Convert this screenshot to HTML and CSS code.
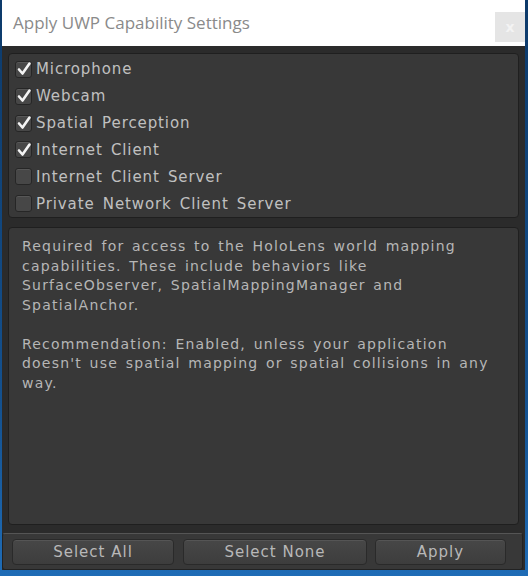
FILE: index.html
```html
<!DOCTYPE html>
<html>
<head>
<meta charset="utf-8">
<link rel="stylesheet" href="styles.css">
</head>
<body>
<div class="window">
  <div class="titlebar">
    <span class="title">Apply UWP Capability Settings</span>
    <span class="close">x</span>
  </div>
  <div class="content">
    <div class="panel caps">
      <label class="cap"><span class="box on"><svg viewBox="0 0 16 16"><path d="M3 8.5 L6.5 12.5 L13.5 2.5" /></svg></span>Microphone</label>
      <label class="cap"><span class="box on"><svg viewBox="0 0 16 16"><path d="M3 8.5 L6.5 12.5 L13.5 2.5" /></svg></span>Webcam</label>
      <label class="cap"><span class="box on"><svg viewBox="0 0 16 16"><path d="M3 8.5 L6.5 12.5 L13.5 2.5" /></svg></span>Spatial Perception</label>
      <label class="cap"><span class="box on"><svg viewBox="0 0 16 16"><path d="M3 8.5 L6.5 12.5 L13.5 2.5" /></svg></span>Internet Client</label>
      <label class="cap"><span class="box"></span>Internet Client Server</label>
      <label class="cap"><span class="box"></span>Private Network Client Server</label>
    </div>
    <div class="panel desc">
      <p>Required for access to the HoloLens world mapping capabilities. These include behaviors like SurfaceObserver, SpatialMappingManager and SpatialAnchor.</p>
      <p>Recommendation: Enabled, unless your application doesn't use spatial mapping or spatial collisions in any way.</p>
    </div>
  </div>
  <div class="toolbar">
    <button class="btn btn-all">Select All</button>
    <button class="btn btn-none">Select None</button>
    <button class="btn btn-apply">Apply</button>
  </div>
</div>
</body>
</html>
```
FILE: styles.css
```css
html, body {
  margin: 0;
  padding: 0;
}
body {
  width: 528px;
  height: 576px;
  background: linear-gradient(180deg, #0d3a6a 0%, #14518f 70%, #1f6cb6 100%);
  overflow: hidden;
}
.window {
  margin-left: 2px;
  width: 523px;
  height: 570px;
  display: flex;
  flex-direction: column;
  background: #2b2b2b;
}
.titlebar {
  height: 46px;
  background: #ffffff;
  display: flex;
  align-items: flex-start;
  justify-content: space-between;
  flex-shrink: 0;
}
.title {
  font-family: "Open Sans", "Noto Sans", sans-serif;
  font-size: 17px;
  color: #8a8a8a;
  margin: 11px 0 0 11px;
}
.close {
  width: 30px;
  height: 30px;
  margin: 12px 0 0 0;
  background: #e5e5e5;
  color: #f3f3f3;
  font-family: "DejaVu Sans", sans-serif;
  font-size: 14px;
  font-weight: bold;
  display: flex;
  align-items: center;
  justify-content: center;
}
.content {
  flex: 1;
  padding: 7px 6px 8px 6px;
  display: flex;
  flex-direction: column;
  gap: 9px;
  background: #2b2b2b;
}
.panel {
  background: #383838;
  border: 1px solid #1f1f1f;
  border-radius: 4px;
  box-sizing: border-box;
}
.caps {
  height: 165px;
  padding: 2px 0 0 6px;
  display: flex;
  flex-direction: column;
}
.cap {
  height: 27px;
  display: flex;
  align-items: center;
  font-family: "DejaVu Sans", sans-serif;
  font-size: 15px;
  letter-spacing: 0.9px;
  word-spacing: 2.5px;
  color: #c0c0c0;
}
.box {
  width: 15px;
  height: 15px;
  margin-right: 4px;
  border-radius: 3px;
  background: #474747;
  border: 1px solid #262626;
  box-shadow: inset 0 1px 0 #575757;
  display: flex;
  align-items: center;
  justify-content: center;
  flex-shrink: 0;
}
.box svg {
  width: 16px;
  height: 16px;
  overflow: visible;
}
.box svg path {
  fill: none;
  stroke: #f4f4f4;
  stroke-width: 2.6;
  stroke-linecap: round;
  stroke-linejoin: round;
}
.desc {
  flex: 1;
  padding: 9px 20px 9px 13px;
  font-family: "DejaVu Sans", sans-serif;
  font-size: 14px;
  letter-spacing: 1.2px;
  word-spacing: 2px;
  line-height: 19.5px;
  color: #b6b6b6;
}
.desc p {
  margin: 0 0 19.5px 0;
}
.toolbar {
  height: 37px;
  flex-shrink: 0;
  background: #383838;
  border: 1px solid #222;
  border-top: 1px solid #555;
  border-radius: 3px;
  box-sizing: border-box;
  margin-right: 2px;
  display: flex;
  align-items: center;
  padding: 0 0 0 9px;
}
.btn {
  height: 26px;
  background: linear-gradient(180deg, #474747, #3d3d3d);
  border: 1px solid #2a2a2a;
  box-shadow: inset 0 1px 0 #555;
  border-radius: 4px;
  font-family: "DejaVu Sans", sans-serif;
  font-size: 15px;
  letter-spacing: 1px;
  color: #b8b8b8;
  padding: 0;
}
.btn-all { width: 162px; }
.btn-none { width: 184px; margin-left: 9px; }
.btn-apply { width: 131px; margin-left: 8px; }
```
